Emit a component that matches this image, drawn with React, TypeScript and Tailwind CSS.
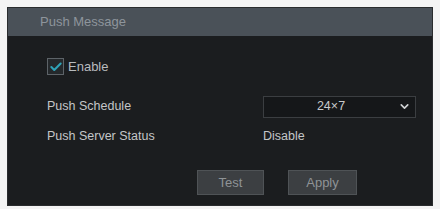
import { Check, ChevronDown } from 'lucide-react'

const font = { fontFamily: '"Liberation Sans", Arial, sans-serif' }

export default function App() {
  return (
    <div className="flex h-[209px] w-[440px] flex-col bg-[#f4f4f4] px-[7px] pt-[7px] pb-[3px]" style={font}>
      <div className="flex flex-1 flex-col border border-[#2a2c2e] bg-[#1b1d1f]">
        <div className="flex h-[28px] items-center bg-[#4a5158] pl-[32px] text-[13px] text-[#8e959c]">
          Push Message
        </div>

        <div className="flex flex-1 flex-col pl-[39px] pt-[21px]">
          <label className="flex items-center gap-[4px] text-[13px] text-[#b8bbbe]">
            <span className="flex h-[17px] w-[17px] items-center justify-center border border-[#5d6368] bg-[#24282b]">
              <Check className="h-[14px] w-[14px] text-[#2fa3b8]" strokeWidth={3.5} />
            </span>
            Enable
          </label>

          <div className="mt-[19px] grid grid-cols-[216px_153px] items-center gap-y-[9px] text-[12.5px] text-[#c4c6c8]">
            <span>Push Schedule</span>
            <div className="flex h-[22px] items-center border border-[#3b3e41] bg-[#151719] pr-[4px] text-[#c8cacc]">
              <span className="flex-1 text-center">24×7</span>
              <ChevronDown className="h-[13px] w-[13px] text-[#d0d2d4]" strokeWidth={3} />
            </div>
            <span>Push Server Status</span>
            <span>Disable</span>
          </div>

          <div className="mt-[25px] flex gap-[24px] pl-[150px] text-[13px] text-[#8f9396]">
            <button className="h-[25px] w-[67px] border border-[#4f5356] bg-[#3c3f42]">Test</button>
            <button className="h-[25px] w-[69px] border border-[#4f5356] bg-[#3c3f42]">Apply</button>
          </div>
        </div>
      </div>
    </div>
  )
}
